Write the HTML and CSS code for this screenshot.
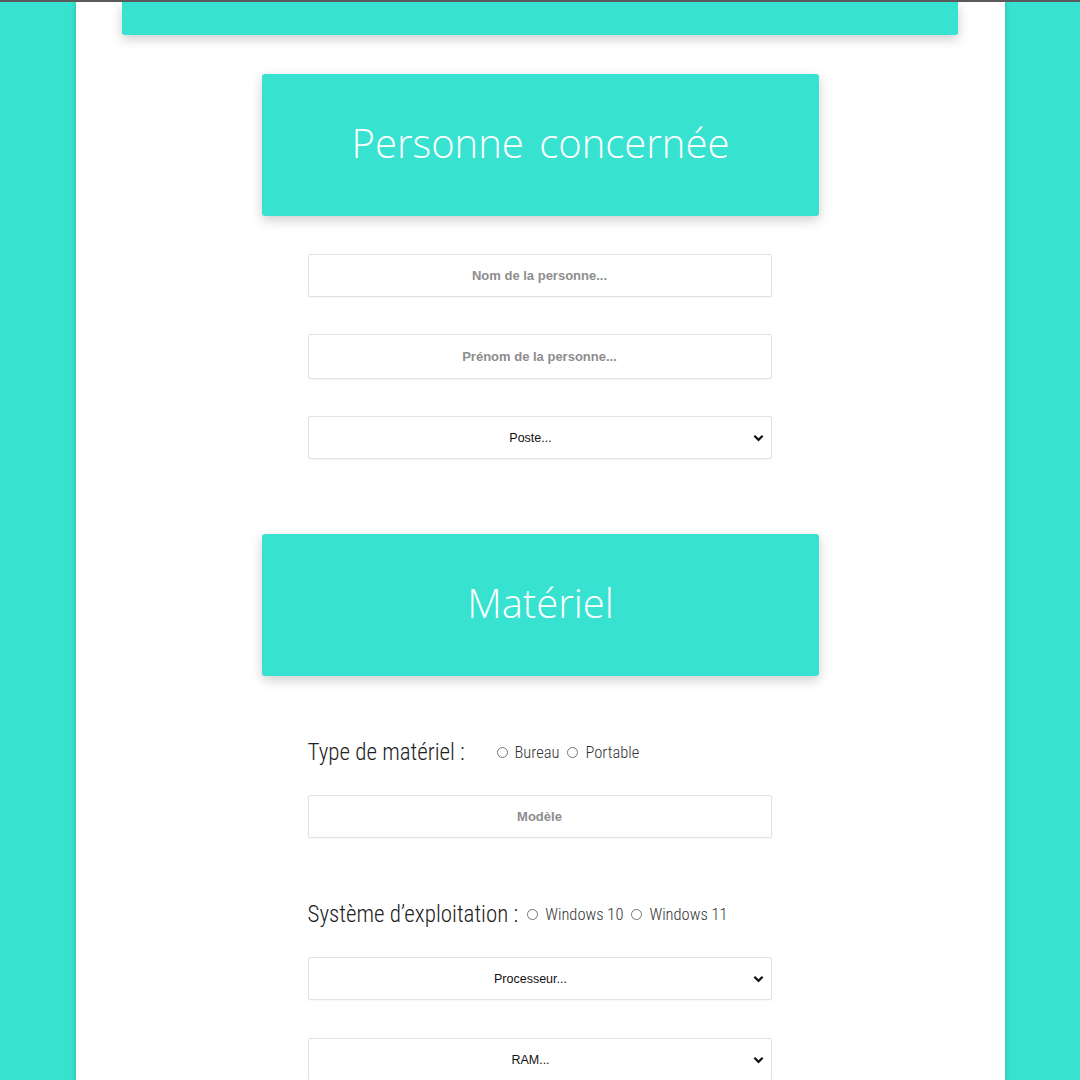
FILE: index.html
```html
<!DOCTYPE html>
<html lang="fr">
<head>
<meta charset="utf-8">
<title>Formulaire</title>
<link rel="stylesheet" href="styles.css">
</head>
<body>
<div class="page">
  <div class="topbar"></div>
  <section class="section">
    <div class="banner"><h2>Personne concernée</h2></div>
    <div class="fields">
      <input class="field" type="text" placeholder="Nom de la personne...">
      <input class="field field-tall" type="text" placeholder="Prénom de la personne...">
      <div class="select"><span>Poste...</span><svg class="chev" viewBox="0 0 12 8" width="11" height="8"><path d="M1.5 1.5 L6 6 L10.5 1.5" fill="none" stroke="#111" stroke-width="2.4"/></svg></div>
    </div>
  </section>
  <section class="section section-2">
    <div class="banner"><h2>Matériel</h2></div>
    <div class="fields fields-2">
      <div class="radio-row">
        <span class="label">Type de matériel :</span>
        <span class="opt"><span class="dot"></span>Bureau</span>
        <span class="opt"><span class="dot"></span>Portable</span>
      </div>
      <input class="field" type="text" placeholder="Modèle">
      <div class="radio-row row-os">
        <span class="label">Système d’exploitation :</span>
        <span class="opt"><span class="dot"></span>Windows 10</span>
        <span class="opt"><span class="dot"></span>Windows 11</span>
      </div>
      <div class="select"><span>Processeur...</span><svg class="chev" viewBox="0 0 12 8" width="11" height="8"><path d="M1.5 1.5 L6 6 L10.5 1.5" fill="none" stroke="#111" stroke-width="2.4"/></svg></div>
      <div class="select"><span>RAM...</span><svg class="chev" viewBox="0 0 12 8" width="11" height="8"><path d="M1.5 1.5 L6 6 L10.5 1.5" fill="none" stroke="#111" stroke-width="2.4"/></svg></div>
    </div>
  </section>
</div>
</body>
</html>
```
FILE: styles.css
```css
html, body {
  margin: 0;
  padding: 0;
  height: 1080px;
  overflow: hidden;
}
body {
  background: #38e2d1;
  border-top: 2px solid #5a5a5a;
  box-sizing: border-box;
  font-family: "Liberation Sans", Arial, sans-serif;
}
.page {
  width: 929px;
  margin-left: 76px;
  background: #fff;
  min-height: 1100px;
  box-shadow: 0 0 6px rgba(0, 0, 0, 0.18);
  display: flex;
  flex-direction: column;
  align-items: center;
}
.topbar {
  width: 836px;
  height: 33px;
  margin-right: 1px;
  background: #38e2d1;
  border-radius: 0 0 3px 3px;
  box-shadow: 0 4px 12px rgba(0, 0, 0, 0.2);
}
.section {
  display: flex;
  flex-direction: column;
  align-items: center;
  margin-top: 39px;
}
.section-2 {
  margin-top: 75px;
}
.banner {
  width: 557px;
  height: 142px;
  background: #38e2d1;
  border-radius: 3px;
  box-shadow: 0 4px 12px rgba(0, 0, 0, 0.2);
  display: flex;
  align-items: center;
  justify-content: center;
}
.banner h2 {
  margin: 0;
  color: #fff;
  font-family: "Open Sans", sans-serif;
  font-weight: 300;
  font-size: 40px;
  word-spacing: 5px;
  position: relative;
  top: -3px;
}
.fields {
  width: 464px;
  margin-top: 38px;
  margin-right: 2px;
  display: flex;
  flex-direction: column;
  gap: 37px;
}
.field {
  box-sizing: border-box;
  width: 464px;
  height: 43px;
  margin: 0;
  border: 1px solid #e2e2e2;
  border-radius: 2px;
  box-shadow: 0 1px 2px rgba(0, 0, 0, 0.04);
  text-align: center;
  font-family: "Liberation Sans", Arial, sans-serif;
  font-weight: bold;
  font-size: 13px;
  color: #333;
  outline: none;
}
.field::placeholder {
  color: #8d8d8d;
}
.field-tall {
  height: 45px;
}
.select {
  box-sizing: border-box;
  width: 464px;
  height: 43px;
  padding-right: 18px;
  border: 1px solid #e2e2e2;
  border-radius: 2px;
  box-shadow: 0 1px 2px rgba(0, 0, 0, 0.04);
  display: flex;
  align-items: center;
  justify-content: center;
  position: relative;
  font-family: "Liberation Sans", Arial, sans-serif;
  font-size: 12.5px;
  color: #111;
}
.chev {
  position: absolute;
  right: 7px;
  top: 17px;
}
.fields-2 {
  margin-top: 60px;
  gap: 0;
}
.radio-row {
  display: flex;
  align-items: center;
  height: 32px;
  font-family: "Roboto Condensed", "Liberation Sans Narrow", "Liberation Sans", sans-serif;
  font-stretch: condensed;
  font-weight: 300;
  color: #333;
}
.radio-row + .field {
  margin-top: 27px;
}
.row-os {
  margin-top: 60px;
}
.row-os + .select {
  margin-top: 27px;
}
.select + .select {
  margin-top: 38px;
}
.label {
  font-size: 23px;
  min-width: 180px;
  margin-right: 9px;
  color: #222;
}
.opt {
  display: flex;
  align-items: center;
  font-size: 16.5px;
  margin-right: 8px;
  color: #333;
}
.dot {
  width: 9px;
  height: 9px;
  border: 1px solid #777;
  border-radius: 50%;
  margin-right: 7px;
}
```
